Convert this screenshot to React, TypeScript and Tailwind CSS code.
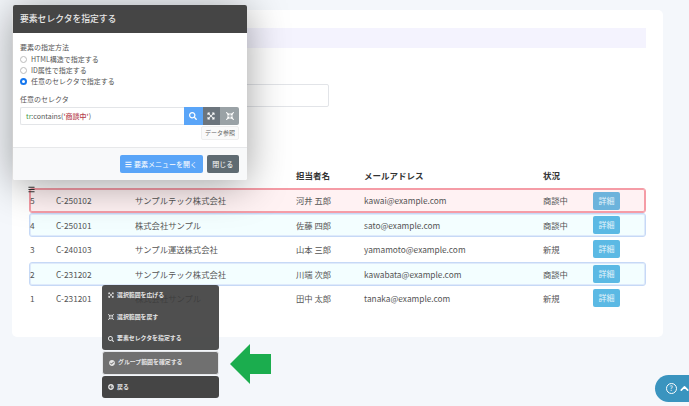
import { FaBars, FaCheckCircle, FaArrowCircleLeft, FaCompressArrowsAlt, FaExpandArrowsAlt, FaSearch } from "react-icons/fa"
import { ChevronUp } from "lucide-react"

const rows = [
  { no: "5", code: "C-250102", company: "サンプルテック株式会社", person: "河井 五郎", email: "kawai@example.com", status: "商談中", tone: "red" },
  { no: "4", code: "C-250101", company: "株式会社サンプル", person: "佐藤 四郎", email: "sato@example.com", status: "商談中", tone: "blue" },
  { no: "3", code: "C-240103", company: "サンプル運送株式会社", person: "山本 三郎", email: "yamamoto@example.com", status: "新規", tone: "" },
  { no: "2", code: "C-231202", company: "サンプルテック株式会社", person: "川端 次郎", email: "kawabata@example.com", status: "商談中", tone: "blue" },
  { no: "1", code: "C-231201", company: "株式会社サンプル", person: "田中 太郎", email: "tanaka@example.com", status: "新規", tone: "" },
]

const cols = "grid h-[24.4px] grid-cols-[26px_79px_161px_68px_179px_50px_1fr] items-center"

function Row({ row }: { row: (typeof rows)[number] }) {
  const tone =
    row.tone === "red"
      ? "rounded-[3px] border border-[#f59ca6] bg-[#fff2f3] shadow-[inset_0_0_0_1px_#f59ca6]"
      : row.tone === "blue"
        ? "rounded-[3px] border border-[#c6d9f6] bg-[#f3feff] shadow-[inset_0_0_0_1px_#dfeafb]"
        : "border border-transparent"
  return (
    <div className={`${cols} ${tone} -mx-px box-border text-[8.3px] text-[#555]`}>
      <span>{row.no}</span>
      <span>{row.code}</span>
      <span>{row.company}</span>
      <span>{row.person}</span>
      <span>{row.email}</span>
      <span>{row.status}</span>
      <span className={`flex h-[18px] w-[27px] items-center justify-center rounded-[2px] text-[8px] text-[#e4f4fb] ${row.tone === "red" ? "bg-[#6cb3dc]" : "bg-[#5bb9e4]"}`}>詳細</span>
    </div>
  )
}

function MenuItem({ icon, label }: { icon: React.ReactNode; label: string }) {
  return (
    <div className="flex h-[21.7px] items-center gap-[3px] px-[6px] text-[5.9px] font-bold text-[#e6e6e6]">
      {icon}
      <span>{label}</span>
    </div>
  )
}

function Radio({ checked, label }: { checked?: boolean; label: string }) {
  return (
    <div className="flex h-[11.3px] items-center gap-[4px] text-[7px] text-[#555]">
      <span className={`box-border size-[7px] rounded-full border ${checked ? "border-[2px] border-[#1677ee] bg-white" : "border-[#bbb] bg-white"}`} />
      <span>{label}</span>
    </div>
  )
}

export default function App() {
  return (
    <div className="relative h-[406px] w-[689px] overflow-hidden bg-[#f4f7fb] pt-[10px] pl-[12px] font-['Noto_Sans_CJK_JP',sans-serif]">
      <div className="h-[327px] w-[651px] rounded-[5px] bg-white px-[18px] pt-[18px]">
        <div className="h-[20px] w-[616px] bg-[#f4f3fe]" />
        <div className="mt-[36px] h-[23px] w-[299px] rounded-[2px] border border-[#e2e4e8] bg-white" />
        <div className="mt-[57px]">
          <div className={`${cols} -mx-px h-[22px] px-px pb-[2px] text-[8.5px] font-bold text-[#333]`}>
            <span />
            <span />
            <span />
            <span>担当者名</span>
            <span>メールアドレス</span>
            <span>状況</span>
            <span />
          </div>
          {rows.map((row) => (
            <Row key={row.no} row={row} />
          ))}
        </div>
      </div>

      <FaBars className="absolute top-[186px] left-[28px] size-[7px] text-[#333]" />

      {/* selector dialog */}
      <div className="absolute top-[4.5px] left-[13px] flex h-[175.5px] w-[234px] flex-col overflow-hidden rounded-[2px] bg-white shadow-[0_4px_40px_rgba(0,0,0,0.38)]">
        <div className="flex h-[28px] shrink-0 items-center bg-[#454545] px-[7px] text-[8.8px] font-medium text-[#e8e8e8]">
          要素セレクタを指定する
        </div>
        <div className="flex-1 px-[7px] pt-[8px]">
          <div className="mb-[1px] text-[7px] leading-[12px] text-[#555]">要素の指定方法</div>
          <Radio label="HTML構造で指定する" />
          <Radio label="ID属性で指定する" />
          <Radio checked label="任意のセレクタで指定する" />
          <div className="mt-[6px] text-[7px] leading-[12px] text-[#555]">任意のセレクタ</div>
          <div className="mt-[2px] flex h-[17.5px] w-[219px]">
            <div className="flex w-[164px] items-center rounded-l-[2px] border border-r-0 border-[#e3e5e8] pl-[5px] text-[7px] text-[#555]">
              <span className="text-[#3e9a4a]">tr</span>:contains(<span className="font-medium text-[#b5404c]">'商談中'</span>)
            </div>
            <span className="flex w-[18.5px] items-center justify-center bg-[#5aa5f8] text-white"><FaSearch className="size-[8px]" /></span>
            <span className="flex w-[17.5px] items-center justify-center bg-[#6c757d] text-white"><FaExpandArrowsAlt className="size-[8px]" /></span>
            <span className="flex w-[19px] items-center justify-center rounded-r-[2px] bg-[#9aa2a6] text-white"><FaCompressArrowsAlt className="size-[8px]" /></span>
          </div>
          <div className="mt-[1px] flex w-[219px] justify-end">
            <span className="flex h-[14px] w-[38px] items-center justify-center rounded-[2px] border border-[#eee] bg-[#fafafa] text-[6px] text-[#666]">データ参照</span>
          </div>
        </div>
        <div className="flex h-[33px] shrink-0 items-center justify-end gap-[4px] border-t border-[#e7e8ea] bg-[#f8f9fa] pr-[8px]">
          <span className="flex h-[17.5px] w-[83px] items-center justify-center gap-[2px] rounded-[2px] bg-[#5aa5f8] text-[7px] text-white">
            <FaBars className="size-[7px]" />
            要素メニューを開く
          </span>
          <span className="flex h-[17.5px] w-[32.5px] items-center justify-center rounded-[2px] bg-[#5f6b72] text-[7px] text-white">閉じる</span>
        </div>
      </div>

      {/* element menu */}
      <div className="absolute top-[284.5px] left-[102px] flex w-[117px] flex-col gap-[1.5px]">
        <div className="h-[65px] rounded-[3px] bg-[#3c3c3c]/90">
          <MenuItem icon={<FaExpandArrowsAlt className="size-[6px]" />} label="選択範囲を広げる" />
          <MenuItem icon={<FaCompressArrowsAlt className="size-[6px]" />} label="選択範囲を戻す" />
          <MenuItem icon={<FaSearch className="size-[6px]" />} label="要素セレクタを指定する" />
        </div>
        <div className="rounded-[3px] border border-[#e5e7ea] bg-[#707070]">
          <MenuItem icon={<FaCheckCircle className="size-[6px]" />} label="グループ範囲を確定する" />
        </div>
        <div className="rounded-[3px] bg-[#454545]">
          <MenuItem icon={<FaArrowCircleLeft className="size-[6px]" />} label="戻る" />
        </div>
      </div>

      {/* green arrow */}
      <svg className="absolute top-[343px] left-[229px]" width="43" height="42" viewBox="0 0 43 42">
        <path d="M1 21 L21 1 L21 11 L42 11 L42 31 L21 31 L21 41 Z" fill="#1bad4e" />
      </svg>

      {/* help tab */}
      <div className="absolute top-[375px] left-[655px] flex h-[27px] w-[34px] items-center gap-[1px] rounded-l-full bg-[#3a94bf] pl-[11px] text-white">
        <span className="flex size-[10.5px] shrink-0 items-center justify-center rounded-full border border-white text-[7px] leading-none">?</span>
        <ChevronUp className="size-[13px] shrink-0" strokeWidth={3} />
      </div>
    </div>
  )
}
